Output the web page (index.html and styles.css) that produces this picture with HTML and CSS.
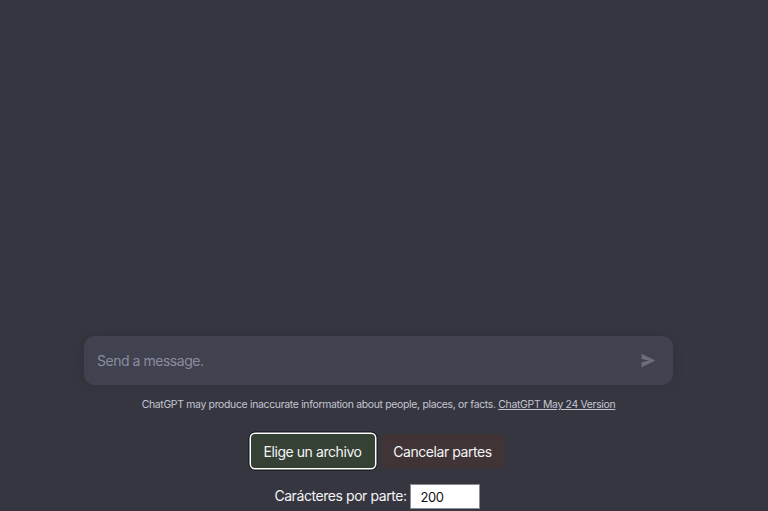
FILE: index.html
```
<!DOCTYPE html>
<html lang="es">
<head>
<meta charset="utf-8">
<title>ChatGPT</title>
<link rel="stylesheet" href="styles.css">
</head>
<body>
<main class="chat">
  <form class="composer">
    <span class="placeholder">Send a message.</span>
    <svg class="send" viewBox="0 0 16 16" aria-hidden="true"><path d="M1.5 .8 15.2 7.6 1.5 14.4V9.3L9 7.6 1.5 5.9Z"/></svg>
  </form>
  <p class="notice">ChatGPT may produce inaccurate information about people, places, or facts. <a href="#">ChatGPT May 24 Version</a></p>
  <div class="actions">
    <button class="btn choose" type="button"><span>Elige un archivo</span></button>
    <button class="btn cancel" type="button"><span>Cancelar partes</span></button>
  </div>
  <label class="size"><span class="caption">Carácteres por parte:</span><input class="count" type="text" value="200"></label>
</main>
</body>
</html>
```
FILE: styles.css
```
* { box-sizing: border-box; }
body {
  margin: 0;
  height: 511px;
  overflow: hidden;
  background: #353640;
  font: 14px/22px Inter, "Liberation Sans", Arial, sans-serif;
  letter-spacing: -0.43px;
  color: #f4f4f6;
}
.chat {
  width: 589px;
  height: 511px;
  margin-left: 84px;
  padding-top: 336px;
  display: flex;
  flex-direction: column;
  align-items: center;
  white-space: nowrap;
}
.composer {
  flex: none;
  width: 100%;
  height: 49px;
  padding: 0 17px 0 13px;
  display: flex;
  align-items: center;
  justify-content: space-between;
  background: #41424f;
  border-radius: 11px;
  box-shadow: 0 0 13px rgba(0, 0, 0, .1);
}
.placeholder { color: #8b8ba0; letter-spacing: -0.47px; }
.send { width: 16px; height: 16px; fill: #6c6d7c; }
.notice {
  margin: 11px 0 0;
  font-size: 10.4px;
  line-height: 17px;
  letter-spacing: -0.3px;
  color: #c5c5d2;
}
.notice a { color: inherit; text-underline-offset: 1px; }
.actions { display: flex; gap: 6px; margin: 21px 2px 0 0; }
.btn {
  height: 34px;
  width: 124px;
  padding: 1px 0 0;
  border: 0;
  border-radius: 4px;
  font: inherit;
  letter-spacing: inherit;
  color: inherit;
}
.choose { background: #344134; box-shadow: 0 0 0 1.5px #fff, 0 0 0 2.5px #101014; }
.cancel { background: #413436; }
.size { display: flex; align-items: center; gap: 3px; margin: 16px 3px 0 0; }
.caption { padding-bottom: 1px; }
.count {
  width: 70px;
  height: 25px;
  padding: 0 10px;
  border: 1px solid #8b8b98;
  background: #fff;
  color: #111;
  font: inherit;
  font-size: 13px;
  letter-spacing: -0.5px;
}
```
